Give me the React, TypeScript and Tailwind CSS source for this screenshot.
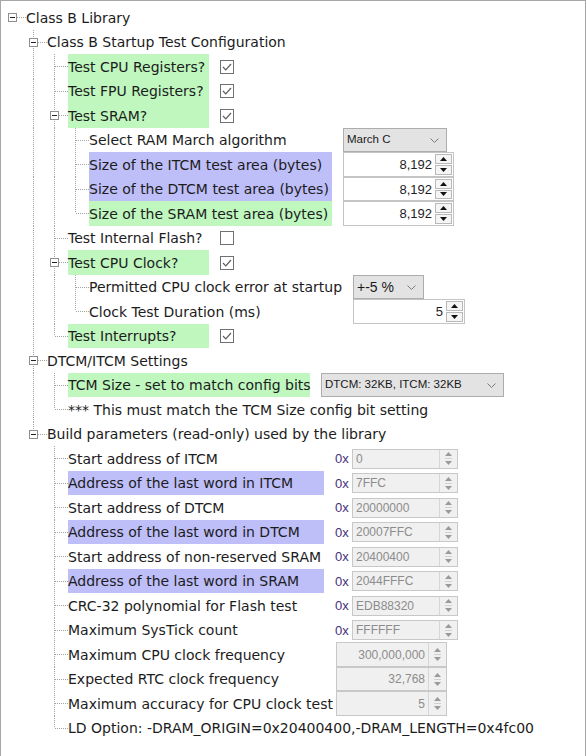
import React from 'react'

type Widget =
  | { kind: 'check'; on: boolean }
  | { kind: 'select'; text: string; w: string; size?: string }
  | { kind: 'spin'; value: string; w: string }
  | { kind: 'hex'; value: string }
  | { kind: 'num'; value: string }

type Node = {
  label: string
  hl?: string
  col?: string
  widget?: Widget
  children?: Node[]
}

const GREEN = 'bg-[#bff7bf]'
const PURPLE = 'bg-[#bebef9]'

const tree: Node = {
  label: 'Class B Library',
  children: [
    {
      label: 'Class B Startup Test Configuration',
      children: [
        { label: 'Test CPU Registers?', hl: GREEN, col: 'w-[141px]', widget: { kind: 'check', on: true } },
        { label: 'Test FPU Registers?', hl: GREEN, col: 'w-[141px]', widget: { kind: 'check', on: true } },
        {
          label: 'Test SRAM?',
          hl: GREEN,
          col: 'w-[141px]',
          widget: { kind: 'check', on: true },
          children: [
            { label: 'Select RAM March algorithm', col: 'w-[243px]', widget: { kind: 'select', text: 'March C', w: 'w-[104px]' } },
            { label: 'Size of the ITCM test area (bytes)', hl: PURPLE, col: 'w-[243px]', widget: { kind: 'spin', value: '8,192', w: 'w-[111px]' } },
            { label: 'Size of the DTCM test area (bytes)', hl: PURPLE, col: 'w-[243px]', widget: { kind: 'spin', value: '8,192', w: 'w-[111px]' } },
            { label: 'Size of the SRAM test area (bytes)', hl: GREEN, col: 'w-[243px]', widget: { kind: 'spin', value: '8,192', w: 'w-[111px]' } },
          ],
        },
        { label: 'Test Internal Flash?', col: 'w-[141px]', widget: { kind: 'check', on: false } },
        {
          label: 'Test CPU Clock?',
          hl: GREEN,
          col: 'w-[141px]',
          widget: { kind: 'check', on: true },
          children: [
            { label: 'Permitted CPU clock error at startup', col: 'w-[253px]', widget: { kind: 'select', text: '+-5 %', w: 'w-[71px]', size: 'text-[14px]' } },
            { label: 'Clock Test Duration (ms)', col: 'w-[253px]', widget: { kind: 'spin', value: '5', w: 'w-[112px]' } },
          ],
        },
        { label: 'Test Interrupts?', hl: GREEN, col: 'w-[141px]', widget: { kind: 'check', on: true } },
      ],
    },
    {
      label: 'DTCM/ITCM Settings',
      children: [
        { label: 'TCM Size - set to match config bits', hl: GREEN, col: 'w-[242px]', widget: { kind: 'select', text: 'DTCM: 32KB, ITCM: 32KB', w: 'w-[183px]' } },
        { label: '*** This must match the TCM Size config bit setting' },
      ],
    },
    {
      label: 'Build parameters (read-only) used by the library',
      children: [
        { label: 'Start address of ITCM', col: 'w-[256px]', widget: { kind: 'hex', value: '0' } },
        { label: 'Address of the last word in ITCM', hl: PURPLE, col: 'w-[256px]', widget: { kind: 'hex', value: '7FFC' } },
        { label: 'Start address of DTCM', col: 'w-[256px]', widget: { kind: 'hex', value: '20000000' } },
        { label: 'Address of the last word in DTCM', hl: PURPLE, col: 'w-[256px]', widget: { kind: 'hex', value: '20007FFC' } },
        { label: 'Start address of non-reserved SRAM', col: 'w-[256px]', widget: { kind: 'hex', value: '20400400' } },
        { label: 'Address of the last word in SRAM', hl: PURPLE, col: 'w-[256px]', widget: { kind: 'hex', value: '2044FFFC' } },
        { label: 'CRC-32 polynomial for Flash test', col: 'w-[256px]', widget: { kind: 'hex', value: 'EDB88320' } },
        { label: 'Maximum SysTick count', col: 'w-[256px]', widget: { kind: 'hex', value: 'FFFFFF' } },
        { label: 'Maximum CPU clock frequency', col: 'w-[256px]', widget: { kind: 'num', value: '300,000,000' } },
        { label: 'Expected RTC clock frequency', col: 'w-[256px]', widget: { kind: 'num', value: '32,768' } },
        { label: 'Maximum accuracy for CPU clock test', col: 'w-[256px]', widget: { kind: 'num', value: '5' } },
        { label: 'LD Option: -DRAM_ORIGIN=0x20400400,-DRAM_LENGTH=0x4fc00' },
      ],
    },
  ],
}

type Row = { node: Node; level: number; guides: boolean[]; last: boolean; open: boolean }

function flatten(node: Node, level: number, guides: boolean[], last: boolean, out: Row[]) {
  out.push({ node, level, guides, last, open: !!node.children })
  const kids = node.children ?? []
  kids.forEach((k, i) => flatten(k, level + 1, [...guides, level > 0 && !last], i === kids.length - 1, out))
  return out
}

const LINE = '#a3a3a3'

// dotted tree guide for an ancestor column
const Guide = ({ on }: { on: boolean }) => (
  <svg width="21" height="100%" className="shrink-0">
    {on && <line x1="7.5" y1="0" x2="7.5" y2="100%" stroke={LINE} strokeDasharray="1 1" />}
  </svg>
)

const Connector = ({ row }: { row: Row }) => {
  const root = row.level === 0
  return (
    <svg width="21" height="100%" className="shrink-0">
      {!root && <line x1="7.5" y1="0" x2="7.5" y2="12" stroke={LINE} strokeDasharray="1 1" />}
      {!root && !row.last && <line x1="7.5" y1="12" x2="7.5" y2="100%" stroke={LINE} strokeDasharray="1 1" />}
      <line x1={row.open ? 12 : 8} y1="12.5" x2="21" y2="12.5" stroke={LINE} strokeDasharray="1 1" />
      {row.open && (
        <g>
          <rect x="3.5" y="8.5" width="8" height="8" fill="#fff" stroke="#8e8e8e" />
          <line x1="5" y1="12.5" x2="10" y2="12.5" stroke="#222" />
        </g>
      )}
    </svg>
  )
}

const Check = ({ on }: { on: boolean }) => (
  <svg width="14" height="14">
    <rect x="0.5" y="0.5" width="13" height="13" fill="#fff" stroke="#707070" />
    {on && <polyline points="3,7 5.8,9.8 11,4" fill="none" stroke="#5c5c5c" strokeWidth="1.2" />}
  </svg>
)

const Chevron = () => (
  <svg width="9" height="5">
    <polyline points="0.5,0.5 4.5,4.5 8.5,0.5" fill="none" stroke="#7a7a7a" />
  </svg>
)

const Tri = ({ up, color }: { up: boolean; color: string }) => (
  <svg width="7" height="4">
    <path d={up ? 'M3.5 0L7 4H0Z' : 'M0 0H7L3.5 4Z'} fill={color} />
  </svg>
)

const Spin = ({ value, w }: { value: string; w: string }) => (
  <div className={`flex h-full ${w} border border-[#c4c4c4] bg-white`}>
    <div className="flex flex-1 items-center justify-end pr-[3px] text-[13px] text-[#1e1e1e] [font-family:'Liberation_Sans',sans-serif]">
      {value}
    </div>
    <div className="my-[1px] mr-[1px] flex w-[17px] flex-col gap-[1px]">
      <div className="flex flex-1 items-center justify-center border border-[#b9b9b9] bg-[#f5f5f5]">
        <Tri up color="#111" />
      </div>
      <div className="flex flex-1 items-center justify-center border border-[#b9b9b9] bg-[#f5f5f5]">
        <Tri up={false} color="#111" />
      </div>
    </div>
  </div>
)

const Disabled = ({ value, right, h, w }: { value: string; right: boolean; h: string; w: string }) => (
  <div className={`flex ${h} ${w} border border-[#c8c8c8] bg-[#f0f0f0]`}>
    <div
      className={`flex flex-1 items-center px-[3px] text-[12px] text-[#8c8c8c] [font-family:'Liberation_Sans',sans-serif] ${
        right ? 'justify-end' : 'justify-start'
      }`}
    >
      {value}
    </div>
    <div className="flex w-[18px] flex-col items-center justify-center gap-[2px] border-l border-[#d6d6d6]">
      <Tri up color="#9a9a9a" />
      <div className="h-px w-[7px] bg-[#d0d0d0]" />
      <Tri up={false} color="#9a9a9a" />
    </div>
  </div>
)

const WidgetView = ({ w }: { w: Widget }) => {
  switch (w.kind) {
    case 'check':
      return <Check on={w.on} />
    case 'select':
      return (
        <div className={`flex h-full ${w.w} items-center justify-between border border-[#adadad] bg-[#e3e3e3] pl-[3px] pr-[7px]`}>
          <span className={`whitespace-nowrap ${w.size ?? 'text-[11.5px]'} text-[#1a1a1a] [font-family:'Liberation_Sans',sans-serif]`}>
            {w.text}
          </span>
          <Chevron />
        </div>
      )
    case 'spin':
      return <Spin value={w.value} w={w.w} />
    case 'hex':
      return (
        <div className="flex items-center">
          <span className="w-[17px] text-[13px] text-[#44307a] [font-family:'Liberation_Sans',sans-serif]">0x</span>
          <Disabled value={w.value} right={false} h="h-[20px]" w="w-[106px]" />
        </div>
      )
    case 'num':
      return (
        <div className="ml-px flex h-full">
          <Disabled value={w.value} right h="h-full" w="w-[111px]" />
        </div>
      )
  }
}

export default function App() {
  const rows = flatten(tree, 0, [], true, [])
  return (
    <div className="min-h-[756px] w-[586px] border-l border-r border-t border-[#a6a6a6] bg-white pt-[4px] text-[14px] leading-none text-[#1c1c1c] [font-family:'DejaVu_Sans',sans-serif]">
      {rows.map((r, i) => (
        <div key={i} className={`flex items-stretch pl-[4px] ${i % 2 === 0 ? 'h-[25px]' : 'h-[24px]'}`}>
          {r.guides.map((g, k) => (
            <Guide key={k} on={g} />
          ))}
          <Connector row={r} />
          <div className={`flex h-full items-center whitespace-nowrap ${r.node.col ?? ''} ${r.node.hl ?? ''}`}>
            {r.node.label}
          </div>
          {r.node.widget && (
            <div className="ml-[11px] flex h-full items-center">
              <WidgetView w={r.node.widget} />
            </div>
          )}
        </div>
      ))}
    </div>
  )
}
